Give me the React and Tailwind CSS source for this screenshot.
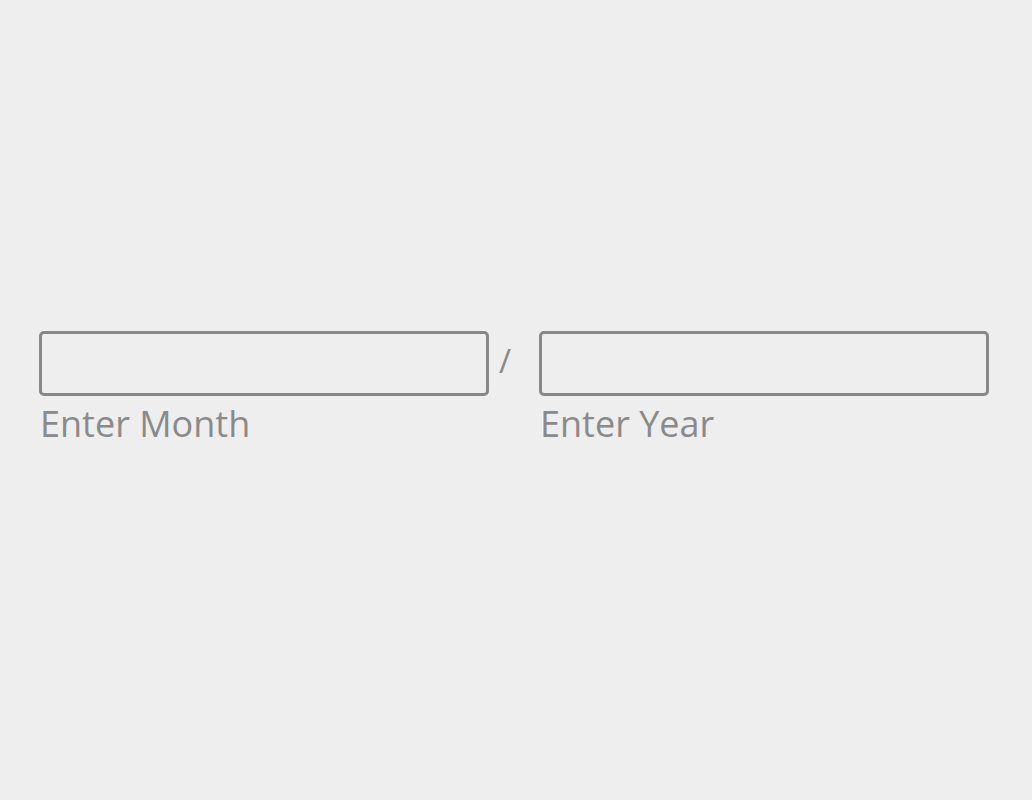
export default function App() {
  const font = { fontFamily: '"Open Sans", sans-serif' };
  return (
    <div className="w-[1032px] h-[800px] bg-[#eeeeee] pt-[331px] pl-[39px]" style={font}>
      <div className="flex items-start">
        <div className="flex flex-col w-[450px]">
          <div className="h-[65px] border-[3px] border-[#888888] rounded-[5px]" />
          <div className="text-[36px] leading-none text-[#8a8a8a] pl-[1px] mt-[10px]">Enter Month</div>
        </div>
        <div className="w-[50px] h-[65px] flex items-center justify-start pl-[10px] pb-[6px] text-[33px] text-[#8a8a8a] leading-none">/</div>
        <div className="flex flex-col w-[450px]">
          <div className="h-[65px] border-[3px] border-[#888888] rounded-[5px]" />
          <div className="text-[36px] leading-none text-[#8a8a8a] pl-[1px] mt-[10px]">Enter Year</div>
        </div>
      </div>
    </div>
  );
}
